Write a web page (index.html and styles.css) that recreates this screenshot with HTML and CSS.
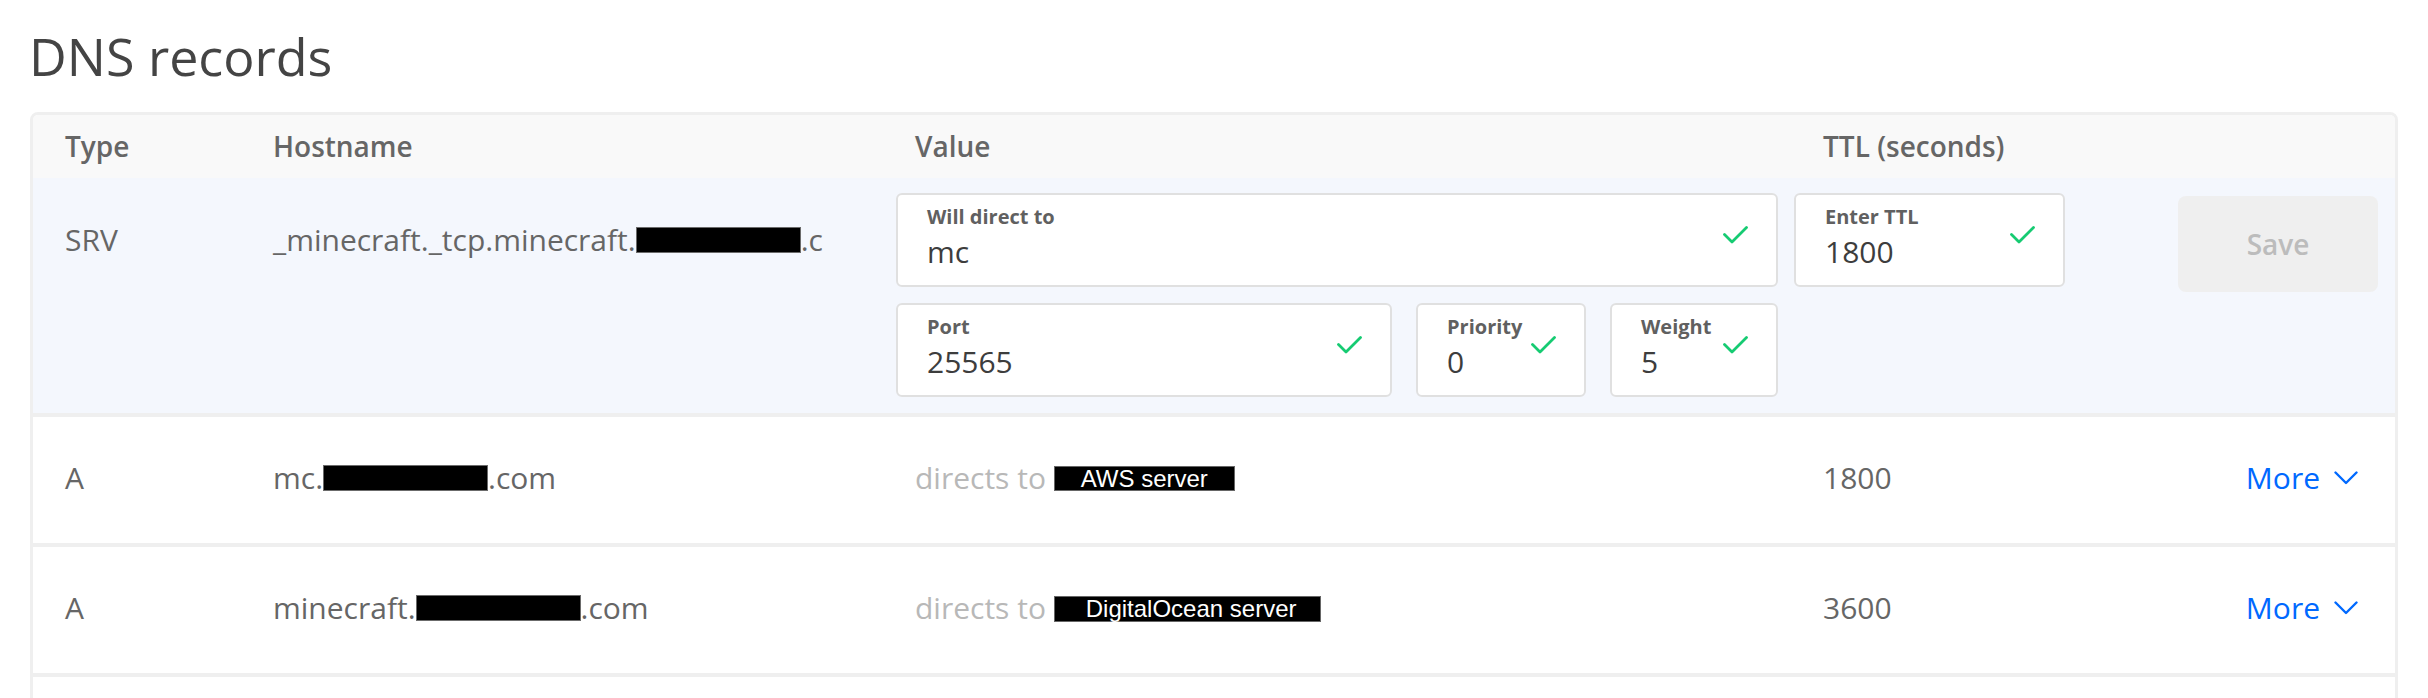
FILE: index.html
```html
<!DOCTYPE html>
<html lang="en">
<head>
<meta charset="utf-8">
<title>DNS records</title>
<link rel="stylesheet" href="styles.css">
</head>
<body>
<div class="page">
  <h1 class="title">DNS records</h1>
  <div class="card">
    <div class="row head">
      <div>Type</div>
      <div>Hostname</div>
      <div>Value</div>
      <div>TTL (seconds)</div>
    </div>

    <div class="row edit">
      <div class="text-cell">SRV</div>
      <div class="text-cell">_minecraft._tcp.minecraft.<span class="redact"></span>.c</div>
      <div class="value-edit">
        <div class="fields">
          <div class="field wide">
            <div class="field-text"><div class="label">Will direct to</div><div class="val">mc</div></div>
            <svg class="check" width="25" height="18" viewBox="0 0 25 18"><polyline points="1.5,8.5 9,16 23.5,1.5" /></svg>
          </div>
          <div class="field">
            <div class="field-text"><div class="label">Port</div><div class="val">25565</div></div>
            <svg class="check" width="25" height="18" viewBox="0 0 25 18"><polyline points="1.5,8.5 9,16 23.5,1.5" /></svg>
          </div>
          <div class="field">
            <div class="field-text"><div class="label">Priority</div><div class="val">0</div></div>
            <svg class="check" width="25" height="18" viewBox="0 0 25 18"><polyline points="1.5,8.5 9,16 23.5,1.5" /></svg>
          </div>
          <div class="field">
            <div class="field-text"><div class="label">Weight</div><div class="val">5</div></div>
            <svg class="check" width="25" height="18" viewBox="0 0 25 18"><polyline points="1.5,8.5 9,16 23.5,1.5" /></svg>
          </div>
        </div>
      </div>
      <div class="ttl-edit">
        <div class="field ttl">
          <div class="field-text"><div class="label">Enter TTL</div><div class="val">1800</div></div>
          <svg class="check" width="25" height="18" viewBox="0 0 25 18"><polyline points="1.5,8.5 9,16 23.5,1.5" /></svg>
        </div>
        <button class="save" type="button">Save</button>
      </div>
    </div>

    <div class="row rec">
      <div>A</div>
      <div>mc.<span class="redact"></span>.com</div>
      <div class="muted">directs to <span class="server aws">AWS server</span></div>
      <div class="ttl-more">
        <span>1800</span>
        <a class="more" href="#">More <svg class="chev" width="24" height="14" viewBox="0 0 24 14"><polyline points="1.5,1.5 12,12 22.5,1.5" /></svg></a>
      </div>
    </div>

    <div class="row rec">
      <div>A</div>
      <div>minecraft.<span class="redact"></span>.com</div>
      <div class="muted">directs to <span class="server do">DigitalOcean server</span></div>
      <div class="ttl-more">
        <span>3600</span>
        <a class="more" href="#">More <svg class="chev" width="24" height="14" viewBox="0 0 24 14"><polyline points="1.5,1.5 12,12 22.5,1.5" /></svg></a>
      </div>
    </div>

    <div class="row rec empty"></div>
  </div>
</div>
</body>
</html>
```

FILE: styles.css
```css
body {
  margin: 0;
  font-family: "Open Sans", "Noto Sans", sans-serif;
  color: #666;
  background: #fff;
}

.page {
  padding: 0 30px;
}

.title {
  margin: 25px 0 25px -1px;
  font-size: 52px;
  line-height: 62px;
  font-weight: 400;
  color: #444;
}

.card {
  border: 3px solid #efefef;
  border-radius: 8px;
  overflow: hidden;
}

.row {
  display: grid;
  grid-template-columns: 208px 642px 908px 1fr;
  padding: 0 17px 0 32px;
}

.head {
  box-sizing: border-box;
  height: 63px;
  padding-top: 14px;
  background: #f9f9f9;
  font-size: 28px;
  line-height: 34px;
  font-weight: 600;
  color: #666;
}

.edit {
  background: #f4f7fd;
  padding-top: 15px;
  padding-bottom: 16px;
  border-bottom: 4px solid #efefef;
  align-items: start;
}

.text-cell {
  padding-top: 29px;
  font-size: 30px;
  line-height: 36px;
  white-space: nowrap;
}

.redact {
  display: inline-block;
  box-sizing: border-box;
  width: 165px;
  height: 26px;
  background: #000;
  border: 1px solid #6b6b6b;
  vertical-align: -2px;
}

.value-edit {
  margin-left: -19px;
  width: 882px;
}

.fields {
  display: grid;
  grid-template-columns: 496px 170px 168px;
  column-gap: 24px;
  row-gap: 16px;
}

.wide {
  grid-column: 1 / -1;
}

.field {
  box-sizing: border-box;
  height: 94px;
  display: flex;
  align-items: center;
  background: #fff;
  border: 2px solid #e0e0e0;
  border-radius: 6px;
  padding: 10px 28px 15px 29px;
}

.field-text {
  flex: 1;
  min-width: 0;
}

.label {
  font-size: 20px;
  line-height: 24px;
  font-weight: 700;
  color: #606060;
  margin-bottom: 5px;
  white-space: nowrap;
}

.val {
  font-size: 30px;
  line-height: 36px;
  color: #3d3d3d;
}

.check {
  flex: none;
  margin-bottom: 6px;
}

.check polyline {
  fill: none;
  stroke: #16cb72;
  stroke-width: 2.8;
  stroke-linecap: round;
  stroke-linejoin: round;
}

.ttl-edit {
  margin-left: -29px;
  display: flex;
  justify-content: space-between;
  align-items: flex-start;
}

.ttl {
  width: 271px;
}

.save {
  width: 200px;
  height: 96px;
  margin-top: 3px;
  border: none;
  border-radius: 8px;
  background: #efefef;
  color: #bcbcbc;
  font-family: "Open Sans", "Noto Sans", sans-serif;
  font-size: 28px;
  font-weight: 600;
  padding: 0;
}

.rec {
  height: 121px;
  padding-bottom: 5px;
  align-items: center;
  border-bottom: 4px solid #efefef;
  font-size: 30px;
  line-height: 36px;
  white-space: nowrap;
}

.muted {
  color: #b8b8b8;
}

.server {
  display: inline-block;
  box-sizing: border-box;
  height: 25px;
  background: #000;
  border: 1px solid #666;
  color: #fff;
  font-family: "Liberation Sans", Arial, sans-serif;
  font-size: 24px;
  line-height: 23px;
  vertical-align: 2px;
}

.aws {
  width: 181px;
  padding-left: 26px;
}

.do {
  width: 267px;
  height: 26px;
  padding-left: 31px;
}

.ttl-more {
  display: flex;
  justify-content: space-between;
  align-items: center;
}

.more {
  color: #0069ff;
  text-decoration: none;
  margin-right: 20px;
  display: flex;
  align-items: center;
  gap: 14px;
}

.chev polyline {
  fill: none;
  stroke: #0069ff;
  stroke-width: 2.4;
  stroke-linecap: round;
  stroke-linejoin: round;
}

.empty {
  border-bottom: none;
}
```
